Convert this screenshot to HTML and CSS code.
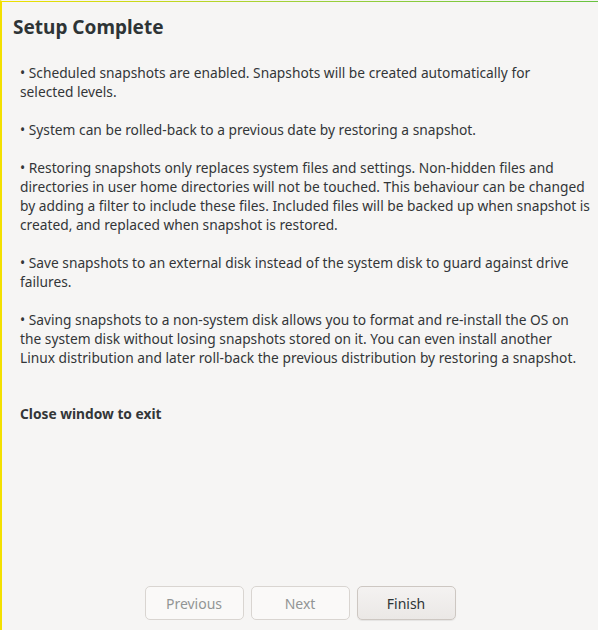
FILE: index.html
```html
<!DOCTYPE html>
<html>
<head>
<meta charset="utf-8">
<link rel="stylesheet" href="styles.css">
</head>
<body>
<div class="window">
  <h1 class="title">Setup Complete</h1>
  <div class="content">
    <p>• Scheduled snapshots are enabled. Snapshots will be created automatically for<br>selected levels.</p>
    <p>• System can be rolled-back to a previous date by restoring a snapshot.</p>
    <p>• Restoring snapshots only replaces system files and settings. Non-hidden files and<br>directories in user home directories will not be touched. This behaviour can be changed<br>by adding a filter to include these files. Included files will be backed up when snapshot is<br>created, and replaced when snapshot is restored.</p>
    <p>• Save snapshots to an external disk instead of the system disk to guard against drive<br>failures.</p>
    <p>• Saving snapshots to a non-system disk allows you to format and re-install the OS on<br>the system disk without losing snapshots stored on it. You can even install another<br>Linux distribution and later roll-back the previous distribution by restoring a snapshot.</p>
    <p class="exit">Close window to exit</p>
  </div>
  <div class="buttons">
    <button class="btn disabled">Previous</button>
    <button class="btn disabled">Next</button>
    <button class="btn">Finish</button>
  </div>
</div>
</body>
</html>
```
FILE: styles.css
```css
html, body {
  margin: 0;
  padding: 0;
  height: 100%;
}
body {
  background: #f6f5f4;
  font-family: "Noto Sans", "DejaVu Sans", sans-serif;
  color: #333638;
}
.window {
  box-sizing: border-box;
  height: 630px;
  border-left: 2px solid #f3e000;
  border-top: 1px solid transparent;
  display: flex;
  flex-direction: column;
  background:
    linear-gradient(to right, #efe000, #9fd03a 50%, #68c33f) top left / 100% 1px no-repeat,
    #f6f5f4;
}
.title {
  margin: 14px 0 0 11px;
  font-size: 19px;
  font-weight: bold;
  line-height: 24px;
  color: #2e3436;
}
.content {
  margin: 24px 0 0 18px;
  font-size: 13.75px;
  line-height: 19px;
  white-space: nowrap;
}
.content p {
  margin: 0 0 19px 0;
}
.content p.exit {
  margin-top: 37px;
  font-weight: bold;
}
.buttons {
  margin-top: auto;
  margin-bottom: 10px;
  display: flex;
  justify-content: center;
  gap: 7px;
}
.btn {
  width: 99px;
  height: 34px;
  border: 1px solid #cdc7c2;
  border-radius: 5px;
  background: linear-gradient(#f4f2f1, #ebe8e6);
  box-shadow: 0 1px 1px rgba(0,0,0,0.07);
  font-family: inherit;
  font-size: 14px;
  color: #2e3436;
}
.btn.disabled {
  background: #faf9f8;
  border-color: #d9d5d1;
  box-shadow: none;
  color: #929595;
}
```
